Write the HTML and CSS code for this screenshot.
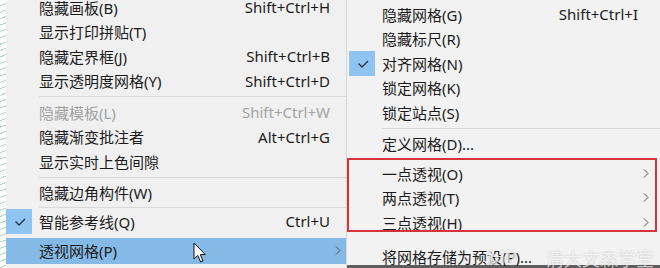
FILE: index.html
```html
<!DOCTYPE html>
<html lang="zh-CN">
<head>
    <meta charset="UTF-8">
    <title>视图菜单</title>
    <link rel="stylesheet" href="styles.css">
</head>
<body>
    <div class="canvas"></div>

    <div class="menu menu-left">
        <div class="item"><span class="check"></span><span class="label">隐藏画板(B)</span><span class="key">Shift+Ctrl+H</span><span class="arrow"></span></div>
        <div class="item"><span class="check"></span><span class="label">显示打印拼贴(T)</span><span class="key"></span><span class="arrow"></span></div>
        <div class="item"><span class="check"></span><span class="label">隐藏定界框(J)</span><span class="key">Shift+Ctrl+B</span><span class="arrow"></span></div>
        <div class="item"><span class="check"></span><span class="label">显示透明度网格(Y)</span><span class="key">Shift+Ctrl+D</span><span class="arrow"></span></div>
        <div class="sep"></div>
        <div class="item disabled"><span class="check"></span><span class="label">隐藏模板(L)</span><span class="key">Shift+Ctrl+W</span><span class="arrow"></span></div>
        <div class="item"><span class="check"></span><span class="label">隐藏渐变批注者</span><span class="key">Alt+Ctrl+G</span><span class="arrow"></span></div>
        <div class="item"><span class="check"></span><span class="label">显示实时上色间隙</span><span class="key"></span><span class="arrow"></span></div>
        <div class="sep"></div>
        <div class="item"><span class="check"></span><span class="label">隐藏边角构件(W)</span><span class="key"></span><span class="arrow"></span></div>
        <div class="sep sep-tight"></div>
        <div class="item">
            <span class="check on">
                <svg width="26" height="25" viewBox="0 0 26 25"><polyline points="9.5,12.5 13,16 19,10" fill="none" stroke="#22344a" stroke-width="1.3"/></svg>
            </span>
            <span class="label">智能参考线(Q)</span><span class="key">Ctrl+U</span><span class="arrow"></span>
        </div>
        <div class="gap"></div>
        <div class="item active">
            <span class="check"></span><span class="label">透视网格(P)</span><span class="key"></span>
            <span class="arrow"><svg width="6" height="9" viewBox="0 0 6 9"><polyline points="1,0.5 5,4.5 1,8.5" fill="none" stroke="#555" stroke-width="1"/></svg></span>
        </div>
        <svg class="cursor" width="14" height="22" viewBox="0 0 14 22">
            <path d="M1 1 L1 17 L4.8 13.4 L7.6 20 L10 19 L7.3 12.6 L12.4 12.6 Z" fill="#fff" stroke="#111" stroke-width="1" stroke-linejoin="round"/>
        </svg>
    </div>

    <div class="menu menu-right">
        <div class="item"><span class="check"></span><span class="label">隐藏网格(G)</span><span class="key">Shift+Ctrl+I</span><span class="arrow"></span></div>
        <div class="item"><span class="check"></span><span class="label">隐藏标尺(R)</span><span class="key"></span><span class="arrow"></span></div>
        <div class="item">
            <span class="check on">
                <svg width="26" height="25" viewBox="0 0 26 25"><polyline points="9.5,12.5 13,16 19,10" fill="none" stroke="#22344a" stroke-width="1.3"/></svg>
            </span>
            <span class="label">对齐网格(N)</span><span class="key"></span><span class="arrow"></span>
        </div>
        <div class="item"><span class="check"></span><span class="label">锁定网格(K)</span><span class="key"></span><span class="arrow"></span></div>
        <div class="item"><span class="check"></span><span class="label">锁定站点(S)</span><span class="key"></span><span class="arrow"></span></div>
        <div class="sep"></div>
        <div class="item"><span class="check"></span><span class="label">定义网格(D)...</span><span class="key"></span><span class="arrow"></span></div>
        <div class="sep sep-hidden"></div>
        <div class="item"><span class="check"></span><span class="label">一点透视(O)</span><span class="key"></span>
            <span class="arrow"><svg width="6" height="9" viewBox="0 0 6 9"><polyline points="1,0.5 5,4.5 1,8.5" fill="none" stroke="#555" stroke-width="1"/></svg></span></div>
        <div class="item"><span class="check"></span><span class="label">两点透视(T)</span><span class="key"></span>
            <span class="arrow"><svg width="6" height="9" viewBox="0 0 6 9"><polyline points="1,0.5 5,4.5 1,8.5" fill="none" stroke="#555" stroke-width="1"/></svg></span></div>
        <div class="item"><span class="check"></span><span class="label">三点透视(H)</span><span class="key"></span>
            <span class="arrow"><svg width="6" height="9" viewBox="0 0 6 9"><polyline points="1,0.5 5,4.5 1,8.5" fill="none" stroke="#555" stroke-width="1"/></svg></span></div>
        <div class="sep sep-wide"></div>
        <div class="item"><span class="check"></span><span class="label">将网格存储为预设(P)...</span><span class="key"></span><span class="arrow"></span></div>

        <div class="highlight-box"></div>
        <div class="watermark"><span class="bili">bili</span><span class="wm-text">清大文森学堂</span></div>
    </div>
</body>
</html>
```

FILE: styles.css
```css
body {
    margin: 0;
    width: 660px;
    height: 268px;
    overflow: hidden;
    display: flex;
    align-items: flex-start;
    background-color: #5d5d5d;
    font-family: "Noto Sans", "Noto Sans CJK SC", sans-serif;
    font-size: 15px;
    color: #1b1b1b;
}

.canvas {
    width: 6px;
    height: 268px;
    flex: none;
    background-color: #fbfdfb;
    background-image: repeating-linear-gradient(160deg, transparent 0 5px, #b9d7c8 5px 6px);
}

.menu {
    flex: none;
    background-color: #f0f0f0;
    position: relative;
}

.menu-left {
    width: 340px;
    height: 273px;
    margin-top: -5px;
    border-right: 1px solid #d6d6d6;
}

.menu-right {
    width: 311px;
    height: 263px;
    padding: 2px 0 0 2px;
    background-color: #f2f2f2;
}

.item {
    height: 24.5px;
    display: flex;
    align-items: center;
    white-space: nowrap;
}

.check {
    width: 26px;
    height: 25px;
    flex: none;
    margin-right: 7px;
}

.check.on {
    background-color: #8fc4f0;
}

.check svg {
    display: block;
}

.label {
    flex: 1;
}

.key {
    flex: none;
}

.arrow {
    width: 16px;
    flex: none;
    display: flex;
    justify-content: center;
}

.arrow svg {
    display: block;
}

.menu-right .arrow {
    width: 16px;
    margin-right: 6px;
}

.disabled {
    color: #a3a3a3;
}

.active {
    background-color: #86bae6;
    height: 26px;
}

.sep {
    height: 7px;
    display: flex;
    align-items: center;
    padding-left: 33px;
}

.sep::after {
    content: "";
    flex: 1;
    height: 1px;
    background-color: #d9d9d9;
}

.sep-tight {
    height: 4px;
}

.sep-hidden {
    height: 5px;
}

.sep-wide {
    height: 10px;
}

.sep-wide::after,
.sep-hidden::after {
    background-color: transparent;
}

.gap {
    height: 4px;
}

.highlight-box {
    position: absolute;
    left: 0;
    top: 158px;
    width: 306px;
    height: 70px;
    border: 2px solid #d7323a;
}

.cursor {
    position: absolute;
    left: 187px;
    top: 247px;
}

.watermark {
    position: absolute;
    left: 140px;
    top: 245px;
    display: flex;
    align-items: center;
    color: rgba(255, 255, 255, 0.7);
    text-shadow: 0 0 2px rgba(0, 0, 0, 0.2);
    white-space: nowrap;
}

.bili {
    width: 59px;
    font-family: "DejaVu Sans", sans-serif;
    font-weight: bold;
    font-size: 17px;
}

.wm-text {
    font-family: "Noto Sans CJK SC", sans-serif;
    font-size: 18px;
}
```
